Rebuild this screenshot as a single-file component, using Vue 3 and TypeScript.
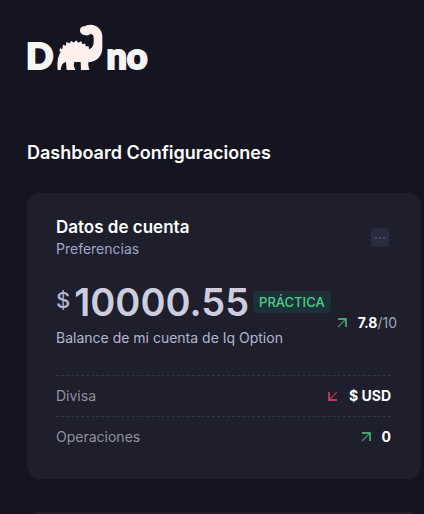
<script setup lang="ts">
interface Row {
  label: string
  value: string
  trend: 'up' | 'down'
}

const rows: Row[] = [
  { label: 'Divisa', value: '$ USD', trend: 'down' },
  { label: 'Operaciones', value: '0', trend: 'up' },
]
</script>

<template>
  <div class="page">
    <header class="header">
      <a class="logo" href="#" aria-label="Dino">
        <span>D</span>
        <svg class="dino" viewBox="22 12 138 138" aria-hidden="true">
          <path
            d="M24 150C22 126 25 108 33 97L29 92L31 85L38 87L40 74L49 77L50 66L59 70L65 62L72 68L80 61L85 68L95 64L98 72L107 71L108 79L117 79L118 88C127 85 132 77 132 66V53Q132 43 122 42Q118 47 108 46Q91 44 91 31Q91 20 105 19Q110 14 122 14C143 14 158 29 158 50V83C158 105 145 124 116 127V137L119 150H94L93 126H74L72 136L77 150H51L49 126Q35 128 33 150Z"
          />
        </svg>
        <span>no</span>
      </a>
    </header>

    <main class="content">
      <h1 class="title">Dashboard Configuraciones</h1>

      <section class="card">
        <div class="card-head">
          <div>
            <h2 class="card-title">Datos de cuenta</h2>
            <p class="card-sub">Preferencias</p>
          </div>
          <button class="menu" type="button" aria-label="Preferencias">
            <i></i><i></i><i></i>
          </button>
        </div>

        <div class="balance">
          <div>
            <div class="amount">
              <span class="currency">$</span>
              <span class="number">10000.55</span>
              <span class="badge">PRÁCTICA</span>
            </div>
            <p class="caption">Balance de mi cuenta de Iq Option</p>
          </div>
          <div class="score">
            <svg class="arrow up" viewBox="0 0 10 10" aria-hidden="true">
              <path class="shaft" d="M1 9L8 2" />
              <path d="M1 1H9V9" />
            </svg>
            <span><b>7.8</b>/10</span>
          </div>
        </div>

        <dl class="rows">
          <div v-for="row in rows" :key="row.label" class="row">
            <dt>{{ row.label }}</dt>
            <dd>
              <svg class="arrow" :class="row.trend" viewBox="0 0 10 10" aria-hidden="true">
                <path class="shaft" d="M1 9L8 2" />
                <path d="M1 1H9V9" />
              </svg>
              {{ row.value }}
            </dd>
          </div>
        </dl>
      </section>

      <section class="card next"></section>
    </main>
  </div>
</template>

<style>
body {
  background: #151521;
}
</style>

<style scoped>
.page {
  height: 100vh;
  overflow: hidden;
  color: #fff;
  background: #151521;
  font: 400 14px/20px Inter, "Noto Sans", sans-serif;
}
h1,
h2,
p,
dl,
dd {
  margin: 0;
}
.header {
  padding: 24px 26px 0;
}
.logo {
  display: flex;
  align-items: flex-end;
  width: max-content;
  height: 46px;
  color: #f6f5f5;
  font: 900 36px/30px Lato, sans-serif;
  text-decoration: none;
  -webkit-text-stroke: 2px #f6f5f5;
}
.dino {
  width: 46px;
  height: 46px;
  margin: 0 3px 0 4px;
  fill: #fff0ee;
}
.content {
  padding: 71px 3px 0 27px;
}
.title {
  font-size: 18px;
  font-weight: 600;
  line-height: 24px;
}
.card {
  margin-top: 28px;
  padding: 24px 30px 22px 29px;
  border-radius: 14px;
  background: #1e1e2d;
}
.card-head {
  display: flex;
  align-items: flex-start;
  justify-content: space-between;
}
.card-title {
  font-size: 17px;
  font-weight: 600;
  line-height: 20px;
}
.card-sub {
  color: #a1a5c5;
  line-height: 24px;
}
.menu {
  display: flex;
  align-items: center;
  justify-content: center;
  gap: 2px;
  width: 18px;
  height: 19px;
  margin: 11px 2px 0 0;
  padding: 0;
  border: 0;
  border-radius: 3px;
  background: #2b2b40;
}
.menu i {
  width: 2px;
  height: 2px;
  background: #4a4a66;
}
.balance {
  display: flex;
  justify-content: space-between;
  margin: 19px -6px 0 0;
}
.amount {
  display: flex;
  align-items: flex-start;
  height: 44px;
}
.currency {
  margin: 8px 4px 0 0;
  color: #b5b5d0;
  font-size: 22px;
  font-weight: 500;
  line-height: 24px;
}
.number {
  color: #cdcdde;
  font-size: 38px;
  font-weight: 600;
  line-height: 44px;
}
.badge {
  margin: 11px 0 0 4px;
  padding: 0 6px;
  border-radius: 5px;
  color: #50cd89;
  background: #1c3238;
  font-size: 13px;
  font-weight: 500;
  line-height: 22px;
}
.caption {
  color: #b5b5cd;
  line-height: 28px;
}
.score {
  display: flex;
  align-items: center;
  gap: 11px;
  padding-top: 14px;
  color: #a1a5b7;
}
.score b {
  color: #fff;
  font-weight: 700;
}
.arrow {
  width: 10px;
  height: 10px;
  fill: none;
  stroke: #50cd89;
  stroke-width: 1.4;
}
.arrow.down {
  stroke: #f1416c;
  transform: rotate(180deg);
}
.shaft {
  opacity: 0.6;
}
.rows {
  margin-top: 23px;
}
.row {
  display: flex;
  justify-content: space-between;
  border-top: 1px dashed #34344a;
  color: #92929f;
  line-height: 40px;
}
.row dd {
  display: flex;
  align-items: center;
  gap: 11px;
  color: #fff;
  font-weight: 700;
}
.next {
  height: 200px;
  margin-top: 33px;
  padding: 0;
}
</style>
